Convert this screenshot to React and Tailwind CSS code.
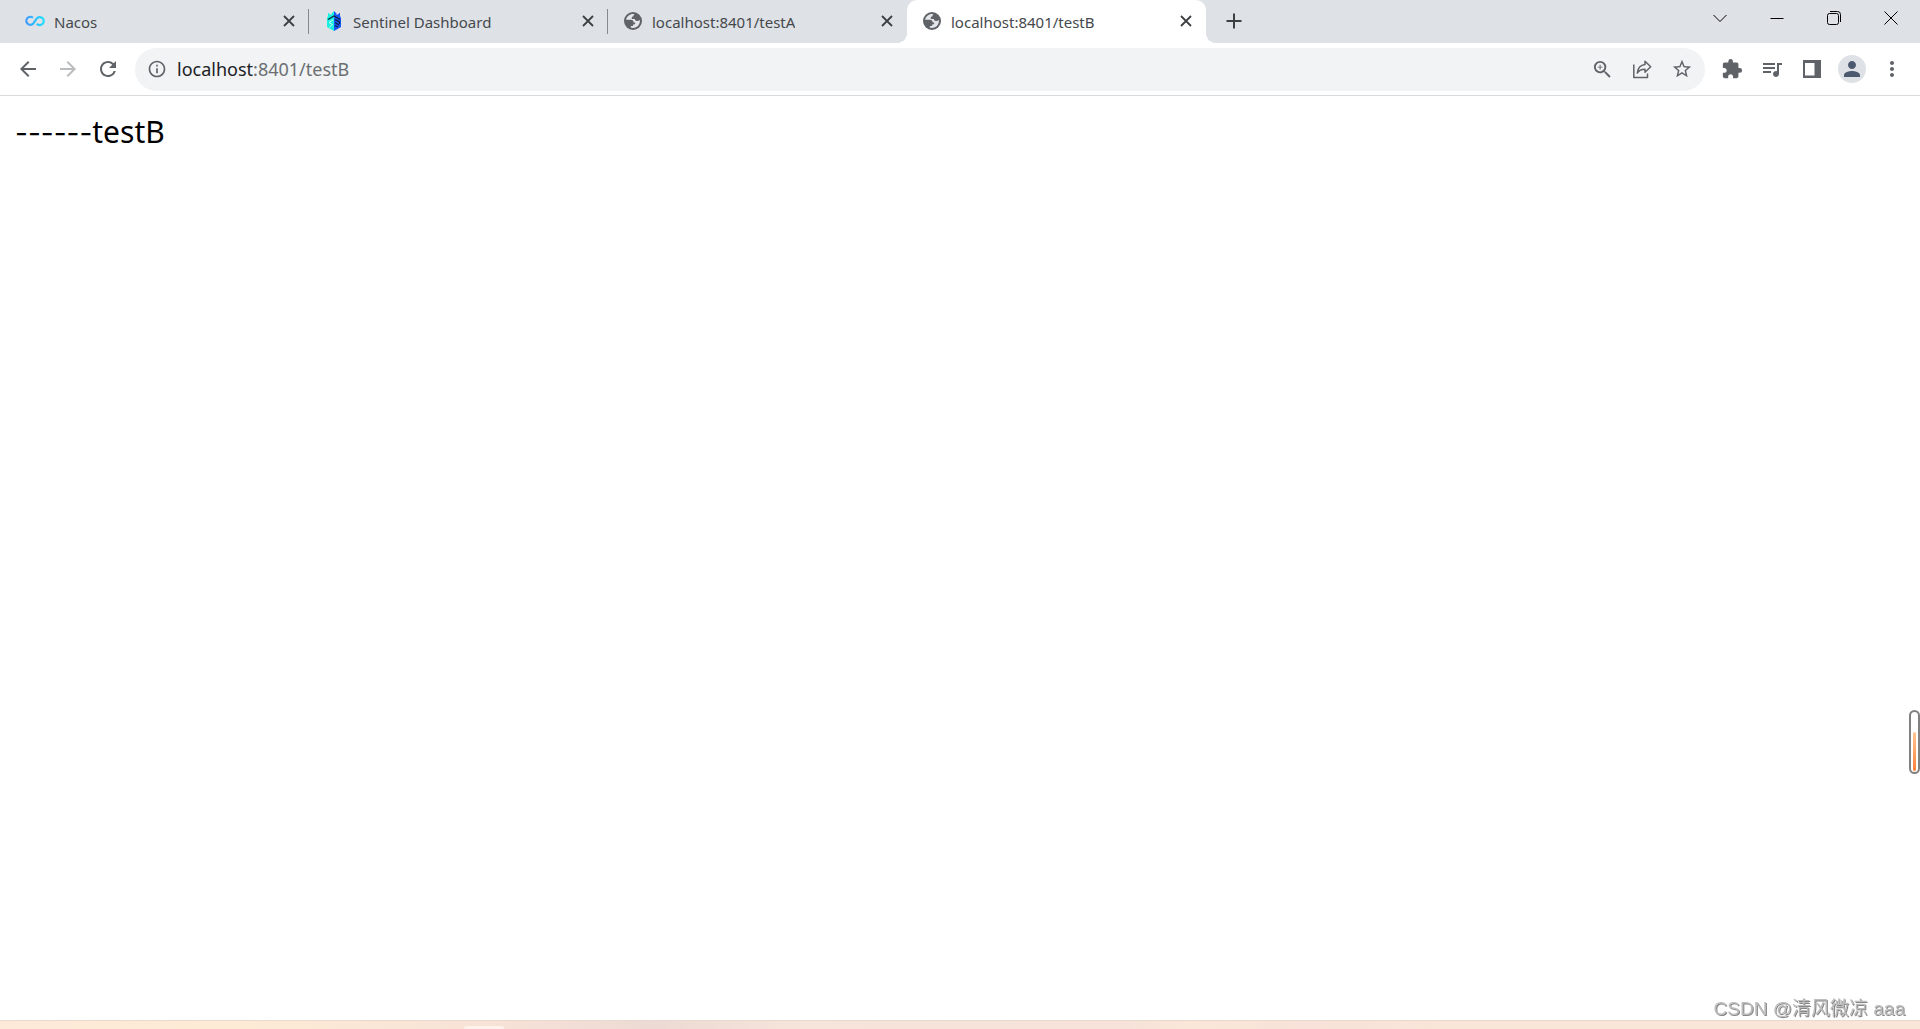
import { MdArrowBack, MdArrowForward, MdRefresh, MdInfoOutline, MdZoomIn, MdStarBorder, MdExtension, MdQueueMusic, MdPerson, MdMoreVert } from "react-icons/md";

const NacosIcon = () => (
  <svg width="20" height="18" viewBox="0 0 20 18" fill="none" strokeWidth="2.2" className="shrink-0" aria-hidden="true">
    <defs>
      <linearGradient id="nacos" x1="0" x2="20" y1="0" y2="0" gradientUnits="userSpaceOnUse">
        <stop offset="0" stopColor="#3f95ff" />
        <stop offset="1" stopColor="#1fe4ff" />
      </linearGradient>
    </defs>
    <path stroke="url(#nacos)" d="M8 5.800A4 4 0 1 0 8.300 11.500L12 6.200A4 4 0 1 1 11.800 11.800" />
  </svg>
);

const SentinelIcon = () => (
  <svg width="16" height="20" viewBox="0 0 16 20" className="shrink-0" aria-hidden="true">
    <path fill="#19f0e0" d="M8 0 5.500 2.500V4L3.500 3 2 1.500V5L1 7v9l7 4Z" />
    <path fill="#1557f5" d="m8 0 2.500 2.500V4l2-1L14 1.500V5l1 2v9l-7 4Z" />
    <path fill="none" stroke="#10233f" strokeWidth="1.300" d="M2 8.500 8 5l6 3.500M9 8.500l4.500 2.500v2M9 11.500l4 2.500M9 14.500l3 1.500" />
    <path fill="none" stroke="#c9fffa" strokeWidth="1" d="M7 9 3 11.500l3.500 2L3.500 16" />
  </svg>
);

const GlobeIcon = () => (
  <svg width="18" height="18" viewBox="0 0 18 18" className="shrink-0" aria-hidden="true">
    <circle cx="9" cy="9" r="9" fill="#5f6368" />
    <path className="fill-[#e4e6e9]" d="M10.500 2.100C6.500 1.300 2.800 3.900 2.100 7.800h4.700c1.900.1 2.900.9 2.800 2.600h1.700c.1 1.600-.8 2.200-2.200 2.200v1.300H6.700v1.700c4 1.400 8-.9 9-5 .3-1 .3-1.700.1-2.500-1.100.8-2.300 1.100-3.700.7-1-.3-1.200-1-1.200-1.700H7.800c-.3-2 .3-2.900 1.700-2.900 0-.9.2-1.500 1-2.100Z" />
    <path fill="#5f6368" d="M2 8.600 6.500 13v2.500C3.500 14.300 1.700 11.600 2 8.600Z" />
  </svg>
);

const ShareIcon = () => (
  <svg width="20" height="20" viewBox="0 0 20 20" fill="none" stroke="currentColor" strokeWidth="1.500" strokeLinejoin="round" aria-hidden="true">
    <path d="M1.800 5.500v13H15.500v-4M13 2.200 18.700 7.700 13 13.200V10.200c-3.200 0-5.800.8-7.700 3.800.5-4.700 3.200-8 7.700-8.500Z" />
  </svg>
);

const PanelIcon = () => (
  <svg width="18" height="18" viewBox="0 0 18 18" fill="currentColor" aria-hidden="true">
    <path fillRule="evenodd" d="M0 0h18v18H0ZM2 3h9.500v12.500H2Z" />
  </svg>
);

const Cross = ({ size, width }) => (
  <svg width={size} height={size} viewBox="0 0 12 12" fill="none" stroke="currentColor" strokeWidth={width} aria-hidden="true">
    <path d="m1 1 10 10M11 1 1 11" />
  </svg>
);

const tabs = [
  { title: "Nacos", Icon: NacosIcon },
  { title: "Sentinel Dashboard", Icon: SentinelIcon },
  { title: "localhost:8401/testA", Icon: GlobeIcon },
  { title: "localhost:8401/testB", Icon: GlobeIcon, active: true },
];

function Tab({ title, Icon, active, divider }) {
  return (
    <div className={`relative flex w-[299px] items-center pb-px pl-4 pr-2.5 ${active ? "rounded-t-[10px] bg-white" : ""}`}>
      {active && (
        <>
          <span className="absolute -left-2.5 bottom-0 size-2.5 bg-[radial-gradient(circle_at_0_0,#dee1e6_10px,#fff_10px)]" />
          <span className="absolute -right-2.5 bottom-0 size-2.5 bg-[radial-gradient(circle_at_100%_0,#dee1e6_10px,#fff_10px)]" />
        </>
      )}
      <button role="tab" aria-selected={!!active} className="flex min-w-0 flex-1 items-center gap-2.5 text-left text-[15px] leading-5 text-[#45494d]">
        <span className="flex w-[18px] justify-center"><Icon /></span>
        <span className="truncate pt-0.5">{title}</span>
      </button>
      <button aria-label={`Close ${title}`} className="grid size-5 place-items-center text-[#3c4043]">
        <Cross size={12} width={1.8} />
      </button>
      {divider && <span className="absolute right-0 top-[9px] h-[25px] w-px bg-[#85888d]" />}
    </div>
  );
}

const IconButton = ({ label, dim, children }) => (
  <button aria-label={label} className={`grid size-10 place-items-center ${dim ? "text-[#babcbe]" : "text-[#5f6368]"}`}>
    {children}
  </button>
);

const WindowButton = ({ label, children }) => (
  <button aria-label={label} className="grid h-9 w-[57px] place-items-center text-black">
    <svg width="14" height="14" viewBox="0 0 14 14" fill="none" stroke="currentColor" aria-hidden="true">{children}</svg>
  </button>
);

export default function App() {
  return (
    <div className="flex min-h-screen flex-col bg-white font-['Noto_Sans','Noto_Sans_CJK_SC',sans-serif]">
      <header>
        <div className="flex h-[43px] bg-[#dee1e6] pl-2.5 pr-px">
          <div role="tablist" className="flex">
            {tabs.map((t, i) => <Tab key={t.title} {...t} divider={i < 2} />)}
          </div>
          <button aria-label="New tab" className="ml-2 grid w-10 place-items-center pb-px text-[#3c4043]">
            <svg width="16" height="16" viewBox="0 0 16 16" stroke="currentColor" strokeWidth="2" aria-hidden="true">
              <path d="M8 .5v15M.5 8h15" />
            </svg>
          </button>
          <div className="ml-auto flex">
            <WindowButton label="Search tabs"><path d="m.5 4 6.500 6.500L13.500 4" /></WindowButton>
            <WindowButton label="Minimize"><path d="M.5 7.500h13" /></WindowButton>
            <WindowButton label="Restore">
              <rect x=".5" y="2.500" width="11" height="11" rx="2" />
              <path d="M3 .5h7.500a3 3 0 0 1 3 3V11" />
            </WindowButton>
            <WindowButton label="Close"><path d="m.5.5 13 13M13.500.5l-13 13" /></WindowButton>
          </div>
        </div>
        <div className="flex h-[53px] items-center border-b border-[#d9dadc] px-2">
          <IconButton label="Back"><MdArrowBack size={24} /></IconButton>
          <IconButton label="Forward" dim><MdArrowForward size={24} /></IconButton>
          <IconButton label="Reload"><MdRefresh size={24} /></IconButton>
          <div className="mx-[7px] flex h-[43px] flex-1 items-center rounded-full bg-[#f1f3f4] pl-3 pr-[3px]">
            <button aria-label="View site information" className="text-[#5f6368]"><MdInfoOutline size={20} /></button>
            <a href="#testB" className="ml-2.5 flex-1 text-[18px] leading-6 text-[#6b6f73]">
              <span className="text-[#202124]">localhost</span>:8401/testB
            </a>
            <IconButton label="Zoom"><MdZoomIn size={23} /></IconButton>
            <IconButton label="Share"><ShareIcon /></IconButton>
            <IconButton label="Bookmark this tab"><MdStarBorder size={22} /></IconButton>
          </div>
          <IconButton label="Extensions"><MdExtension size={22} /></IconButton>
          <IconButton label="Media controls"><MdQueueMusic size={24} /></IconButton>
          <IconButton label="Side panel"><PanelIcon /></IconButton>
          <IconButton label="Profile">
            <span className="grid size-7 place-items-center rounded-full bg-[#dee1e6] text-[#4c5a70]"><MdPerson size={24} /></span>
          </IconButton>
          <IconButton label="Menu"><MdMoreVert size={24} /></IconButton>
        </div>
      </header>
      <main className="flex-1 px-[15px] pt-4 text-[30px] leading-10 text-black">
        <span className="font-['Inter',sans-serif] text-[28px]">------</span>testB
      </main>
      <div className="fixed right-0 top-[710px] flex h-16 w-[11px] items-end rounded-full border-2 border-[#808080] bg-white px-0.5 pb-px">
        <span className="h-[39px] w-full rounded-full bg-linear-to-b from-[#ffc48f] to-[#ff8038]" />
      </div>
      <p className="fixed bottom-1.5 right-[15px] font-['Liberation_Sans','Noto_Sans_CJK_SC',sans-serif] text-[19px] leading-7 text-[#bdbdbd] [text-shadow:1px_1px_0_#888]">CSDN @清风微凉 aaa</p>
      <footer className="flex h-[9px] items-end border-t border-[#e6d9cf] bg-[linear-gradient(90deg,#fde9d8_0%,#fdebd5_12%,#f8e3d7_25%,#eddad4_34%,#f7e4da_42%,#f6e2d9_58%,#fae7d8_62%,#f8e2d9_68%,#f9e6d8_76%,#f9e6d9_100%)]">
        <span className="ml-[464px] h-[3px] w-10 rounded-t-sm bg-[#fdf3ec]" />
      </footer>
    </div>
  );
}
